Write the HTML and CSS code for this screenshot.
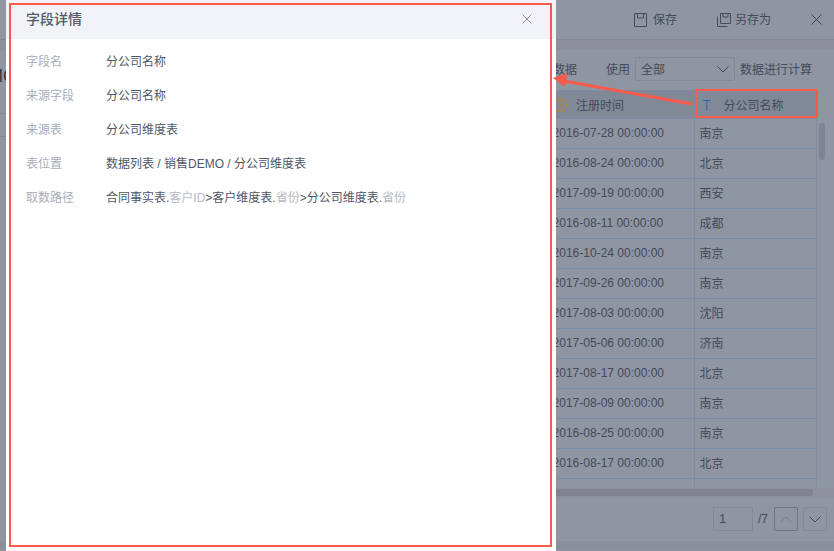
FILE: index.html
```html
<!DOCTYPE html>
<html>
<head>
	<meta charset="utf-8">
	<title>字段详情</title>
	<link rel="stylesheet" href="styles.css">
</head>
<body>

	<div class="pagina">
		<div class="bara">
			<div class="baraItem">
				<svg class="iconSalveaza" viewBox="0 0 13 14"><path d="M.5.5h12v13H.5zM3.5.5V5h6V.5"/></svg>
				<span>保存</span>
			</div>
			<div class="baraItem doi">
				<svg class="iconBara" viewBox="0 0 14 14"><path d="M3.5.5h10v10h-10zM6 .5v3.5h5V.5M.5 3.5v10h10"/></svg>
				<span>另存为</span>
			</div>
			<svg class="iconInchide" viewBox="0 0 11 11"><path d="M.5.5l10 10M10.5.5l-10 10"/></svg>
		</div>
		<div class="banda"></div>

		<div class="continut">
			<div class="stanga">
				<div class="titluPagina">DEMO</div>
				<div class="randStanga"></div>
			</div>
			<div class="dreapta">
				<div class="filtru">
					<span class="filtruText">数据</span>
					<span class="filtruUse">使用</span>
					<div class="selectBox"><span>全部</span>
						<svg class="sageata" viewBox="0 0 12 7"><path d="M.5.5L6 6 11.5.5"/></svg>
					</div>
					<span>数据进行计算</span>
				</div>

				<div class="tabelCadru">
					<table>
						<thead>
							<tr>
								<th>
									<svg class="iconCol" viewBox="0 0 14 14"><circle cx="7" cy="7" r="6.4"/><path d="M7 3v4l2.5 3"/></svg>
									<span>注册时间</span>
								</th>
								<th><span class="iconT">T</span>分公司名称</th>
							</tr>
						</thead>
						<tbody>
							<tr><td>2016-07-28 00:00:00</td><td>南京</td></tr>
							<tr><td>2016-08-24 00:00:00</td><td>北京</td></tr>
							<tr><td>2017-09-19 00:00:00</td><td>西安</td></tr>
							<tr><td>2016-08-11 00:00:00</td><td>成都</td></tr>
							<tr><td>2016-10-24 00:00:00</td><td>南京</td></tr>
							<tr><td>2017-09-26 00:00:00</td><td>南京</td></tr>
							<tr><td>2017-08-03 00:00:00</td><td>沈阳</td></tr>
							<tr><td>2017-05-06 00:00:00</td><td>济南</td></tr>
							<tr><td>2017-08-17 00:00:00</td><td>北京</td></tr>
							<tr><td>2017-08-09 00:00:00</td><td>南京</td></tr>
							<tr><td>2016-08-25 00:00:00</td><td>南京</td></tr>
							<tr><td>2016-08-17 00:00:00</td><td>北京</td></tr>
							<tr><td></td><td></td></tr>
						</tbody>
					</table>
					<div class="scrollV"></div>
				</div>
				<div class="scrollH"><div class="scrollHThumb"></div></div>

				<div class="paginare">
					<div class="paginaInput">1</div>
					<span class="paginaTotal">/7</span>
					<div class="paginaBtn activ"><svg viewBox="0 0 12 7"><path d="M.5 6.5L6 1l5.5 5.5"/></svg></div>
					<div class="paginaBtn"><svg class="inchis" viewBox="0 0 12 7"><path d="M.5.5L6 6 11.5.5"/></svg></div>
				</div>
			</div>
		</div>
		<div class="subsol"></div>
	</div>

	<div class="detalii">
		<div class="detaliiHeader">
			<span class="detaliiTitlu">字段详情</span>
			<svg class="detaliiInchide" viewBox="0 0 10 10"><path d="M.5.5l9 9M9.5.5l-9 9"/></svg>
		</div>
		<div class="detaliiBody">
			<div class="rand"><span class="eticheta">字段名</span><span>分公司名称</span></div>
			<div class="rand"><span class="eticheta">来源字段</span><span>分公司名称</span></div>
			<div class="rand"><span class="eticheta">来源表</span><span>分公司维度表</span></div>
			<div class="rand"><span class="eticheta">表位置</span><span>数据列表 / 销售DEMO / 分公司维度表</span></div>
			<div class="rand"><span class="eticheta">取数路径</span><span>合同事实表.<i>客户ID</i>&gt;客户维度表.<i>省份</i>&gt;分公司维度表.<i>省份</i></span></div>
		</div>
	</div>

	<!-- adnotari rosii peste captura -->
	<div class="cadruRosu"></div>
	<div class="cadruColoana"></div>
	<svg class="sageataRosie" viewBox="0 0 834 551">
		<path d="M692 104L564 81" />
		<polygon points="553,78 567,73 565,87"/>
	</svg>

</body>
</html>
```

FILE: styles.css
```css
* {
	box-sizing: border-box;
}

html, body {
	margin: 0;
	height: 100%;
	overflow: hidden;
}

body {
	position: relative;
	width: 834px;
	height: 551px;
	font-family: "Liberation Sans", "Noto Sans CJK SC", sans-serif;
	font-size: 12px;
	color: #444b5a;
	background-color: #8f95a1;
}

svg {
	display: block;
	fill: none;
	stroke: currentColor;
}

.pagina {
	display: flex;
	flex-direction: column;
	height: 551px;
}

.bara {
	display: flex;
	align-items: center;
	justify-content: flex-end;
	height: 40px;
	padding-right: 12px;
	border-bottom: 1px solid #828894;
	flex-shrink: 0;
}

.baraItem {
	display: flex;
	align-items: center;
	gap: 6px;
	margin-right: 40px;
}

.baraItem span {
	padding-bottom: 2px;
}

.baraItem.doi {
	gap: 4px;
}

.iconSalveaza {
	width: 13px;
	height: 14px;
}

.iconBara {
	width: 14px;
	height: 14px;
}

.iconInchide {
	width: 11px;
	height: 11px;
	color: #3f4655;
}

.banda {
	height: 10px;
	background-color: #8b909c;
	flex-shrink: 0;
}

.continut {
	display: flex;
	flex: 1;
	min-height: 0;
}

.stanga {
	width: 540px;
	overflow: hidden;
	flex-shrink: 0;
}

.titluPagina {
	height: 64px;
	padding: 15px 0 0 0;
	margin-left: -37px;
	font-size: 18px;
	line-height: 22px;
	color: #333a48;
	border-bottom: 1px solid #828894;
}

.randStanga {
	height: 23px;
	border-bottom: 1px solid #828894;
}

.dreapta {
	width: 294px;
}

.filtru {
	display: flex;
	align-items: center;
	height: 24px;
	margin-top: 7px;
	padding-left: 13px;
}

.filtru span {
	padding-bottom: 2px;
}

.filtruUse {
	margin-left: 29px;
}

.selectBox {
	display: flex;
	align-items: center;
	justify-content: space-between;
	width: 100px;
	height: 24px;
	margin: 0 5px;
	padding: 0 5px;
	border: 1px solid #838995;
	border-radius: 2px;
}

.sageata {
	width: 12px;
	height: 7px;
}

.tabelCadru {
	position: relative;
	height: 397px;
	margin-top: 9px;
	overflow: hidden;
}

table {
	width: 277px;
	border-collapse: collapse;
	table-layout: fixed;
}

th, td {
	padding: 0 0 2px;
	border: 1px solid #7c8ba6;
	text-align: left;
	font-weight: normal;
	white-space: nowrap;
}

th:first-child, td:first-child {
	width: 154px;
	border-left: none;
}

th {
	height: 28px;
	padding-bottom: 0;
	background-color: #818998;
}

th:first-child {
	padding-left: 36px;
	position: relative;
}

th:last-child {
	padding-left: 5px;
}

td {
	height: 30px;
}

td:first-child {
	padding-left: 12.6px;
}

td:last-child {
	padding-left: 5px;
}

.iconCol {
	position: absolute;
	left: 13px;
	top: 7px;
	width: 14px;
	height: 14px;
	color: #b58a35;
	stroke-width: 1.2;
}

.iconT {
	display: inline-block;
	width: 24px;
	padding-left: 3px;
	font-family: Roboto, "Liberation Sans", sans-serif;
	font-size: 14px;
	font-weight: 300;
	color: #1f5cb8;
	vertical-align: -1px;
}

.scrollV {
	position: absolute;
	left: 279px;
	top: 33px;
	width: 6px;
	height: 37px;
	border-radius: 3px;
	background-color: #7f8490;
}

.scrollH {
	height: 10px;
	margin-top: 1px;
	padding: 1px 21px 1px 0;
	background-color: #8c919d;
}

.scrollHThumb {
	height: 7px;
	border-radius: 3px;
	background-color: #7e838f;
}

.paginare {
	display: flex;
	align-items: center;
	height: 24px;
	margin-top: 9px;
	padding-left: 173px;
}

.paginaInput {
	width: 40px;
	height: 24px;
	padding-left: 5px;
	border: 1px solid #838995;
	font-size: 13px;
	line-height: 22px;
}

.paginaTotal {
	width: 21px;
	padding-left: 5px;
}

.paginaBtn {
	display: flex;
	align-items: center;
	justify-content: center;
	width: 24px;
	height: 24px;
	margin-right: 5px;
	border: 1px solid #838995;
	border-radius: 2px;
}

.paginaBtn.activ {
	border-color: #6f7480;
	color: #777d89;
}

.paginaBtn svg {
	width: 12px;
	height: 7px;
}

.subsol {
	height: 9px;
	margin-bottom: 1px;
	background-color: #8b909c;
	flex-shrink: 0;
}

/* panoul alb din stanga */
.detalii {
	position: absolute;
	left: 6px;
	top: 0;
	width: 550px;
	height: 551px;
	background-color: white;
}

.detaliiHeader {
	display: flex;
	align-items: center;
	justify-content: space-between;
	height: 39px;
	padding: 0 24px 1px 20px;
	background-color: #f1f3f8;
	font-size: 14px;
	color: #525a6b;
}

.detaliiTitlu {
	padding-bottom: 2px;
	font-weight: 500;
}

.detaliiInchide {
	width: 10px;
	height: 10px;
	color: #8a92a2;
}

.detaliiBody {
	padding-top: 4px;
	color: #4f5768;
}

.rand {
	display: flex;
	align-items: center;
	height: 34px;
	padding-left: 20px;
}

.eticheta {
	width: 80px;
	flex-shrink: 0;
	color: #a8adb8;
}

.rand i {
	font-style: normal;
	color: #b4b9c3;
}

.cadruRosu {
	position: absolute;
	left: 9px;
	top: 3px;
	width: 543px;
	height: 544px;
	border: 2px solid #fa5a4b;
}

.cadruColoana {
	position: absolute;
	left: 695px;
	top: 89px;
	width: 123px;
	height: 29px;
	border: 2px solid #fa5a4b;
}

.sageataRosie {
	position: absolute;
	left: 0;
	top: 0;
	width: 834px;
	height: 551px;
	stroke: #fa5a4b;
	stroke-width: 3;
	pointer-events: none;
}

.sageataRosie polygon {
	fill: #fa5a4b;
	stroke: none;
}
```
